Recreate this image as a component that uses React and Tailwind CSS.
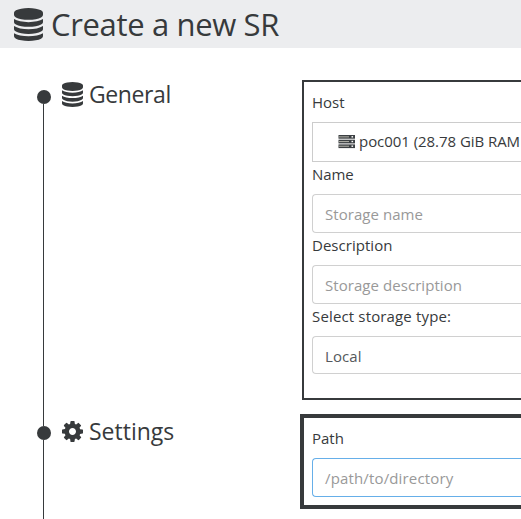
function DatabaseIcon({ className }) {
  return (
    <svg viewBox="0 0 1536 1792" preserveAspectRatio="none" fill="currentColor" className={className}>
      <path d="M768 768q237 0 443-43t325-127v170q0 69-103 128t-280 93.500-385 34.500-385-34.500-280-93.500-103-128v-170q119 84 325 127t443 43zm0 768q237 0 443-43t325-127v170q0 69-103 128t-280 93.500-385 34.500-385-34.500-280-93.500-103-128v-170q119 84 325 127t443 43zm0-384q237 0 443-43t325-127v170q0 69-103 128t-280 93.500-385 34.500-385-34.500-280-93.500-103-128v-170q119 84 325 127t443 43zm0-1152q208 0 385 34.500t280 93.500 103 128v128q0 69-103 128t-280 93.500-385 34.500-385-34.500-280-93.500-103-128v-128q0-69 103-128t280-93.500 385-34.500z" />
    </svg>
  )
}

function CogIcon({ className }) {
  return (
    <svg viewBox="128 128 1536 1536" fill="currentColor" className={className}>
      <path d="M1152 896q0-106-75-181t-181-75-181 75-75 181 75 181 181 75 181-75 75-181zm512-109v222q0 12-8 23t-20 13l-185 28q-19 54-39 91 35 50 107 138 10 12 10 25t-9 23q-27 37-99 108t-94 71q-12 0-26-9l-138-108q-44 23-91 38-16 136-29 186-7 28-36 28h-222q-14 0-24.500-8.500t-11.500-21.500l-28-184q-49-16-90-37l-141 107q-10 9-25 9-14 0-25-11-126-114-165-168-7-10-7-23 0-12 8-23 15-21 51-66.500t54-70.500q-27-50-41-99l-183-27q-13-2-21-12.500t-8-23.500v-222q0-12 8-23t19-13l186-28q14-46 39-92-40-57-107-138-10-12-10-24 0-10 9-23 26-36 98.500-107.500t94.500-71.500q13 0 26 10l138 107q44-23 91-38 16-136 29-186 7-28 36-28h222q14 0 24.500 8.500t11.500 21.500l28 184q49 16 90 37l142-107q9-9 24-9 13 0 25 10 129 119 165 170 7 8 7 22 0 12-8 23-15 21-51 66.500t-54 70.500q26 50 41 98l183 28q13 2 21 12.500t8 23.500z" />
    </svg>
  )
}

function ServerIcon({ className }) {
  return (
    <svg viewBox="0 0 16 14" className={className}>
      {[0, 4.700, 9.400].map(y => (
        <g key={y}>
          <rect x="0" y={y} width="16.500" height="3.700" fill="#3c4043" />
          <rect x="0.500" y={y + 1.300} width="10" height="1.100" fill="#a9a9a0" />
          <rect x="13" y={y + 1.100} width="1.600" height="1.400" fill="#fff" />
        </g>
      ))}
    </svg>
  )
}

function Section({ icon, title, lead, children, headingClass }) {
  return (
    <section className="flex">
      <div className="flex w-[14px] shrink-0 flex-col items-center">
        {lead}
        <div className="size-[14px] shrink-0 rounded-full bg-[#373a3c]" />
        <div className="mr-px w-px flex-1 bg-[#373a3c]" />
      </div>
      <h2 className={`flex w-[251px] shrink-0 items-center self-start pl-[11px] text-[23px] leading-[30px] ${headingClass}`}>
        {icon}
        {title}
      </h2>
      {children}
    </section>
  )
}

function Label({ children }) {
  return <div className="h-8 leading-6">{children}</div>
}

export default function App() {
  return (
    <div className="h-[519px] w-[521px] overflow-hidden bg-white font-['Open_Sans','Noto_Sans',sans-serif] text-[15px] text-[#373a3c]">
      <header className="flex h-12 items-center bg-[#ecedef] pl-[14px]">
        <DatabaseIcon className="h-[33px] w-[29px]" />
        <h1 className="ml-2 text-[31px] leading-[46px] tracking-[-0.35px] whitespace-nowrap">Create a new SR</h1>
      </header>
      <main className="w-[484px] pt-8 ml-[37px]">
        <Section
          headingClass="-mt-px"
          icon={<DatabaseIcon className="h-[25px] w-[21px]" />}
          title={<span className="ml-[6px] tracking-[-0.4px]">General</span>}
          lead={<div className="h-[10px] shrink-0" />}
        >
          <div className="min-w-0 flex-1 pb-[14px]">
            <div className="h-[320px] border-2 border-r-0 border-[#373a3c] pt-2 pl-2">
              <Label><span>Host</span></Label>
              <div className="flex h-10 items-center border border-r-0 border-[#ccc] pb-px pl-[25px]">
                <ServerIcon className="h-[14px] w-[17px] shrink-0" />
                <span className="ml-[4px] tracking-[-0.05px] whitespace-nowrap">poc001 (28.78 GiB RAM</span>
              </div>
              <Label><span className="tracking-[-0.05px]">Name</span></Label>
              <div className="flex h-[39px] items-center rounded-l border border-r-0 border-[#d0d0d0] pt-px pl-3 text-[#999]">
                <span className="tracking-[0.05px]">Storage name</span>
              </div>
              <Label><span className="tracking-[0.03px]">Description</span></Label>
              <div className="flex h-[39px] items-center rounded-l border border-r-0 border-[#d0d0d0] pt-px pl-3 text-[#999]">
                <span className="tracking-[0.06px]">Storage description</span>
              </div>
              <Label><span className="tracking-[0.15px]">Select storage type:</span></Label>
              <div className="flex h-[38px] items-center rounded-l border border-r-0 border-[#d0d0d0] pt-[2px] pl-3 text-[#55595c]">
                <span className="tracking-[0.1px]">Local</span>
              </div>
            </div>
          </div>
        </Section>
        <Section
          headingClass="mt-[2px]"
          icon={<CogIcon className="size-[21px]" />}
          title={<span className="ml-[6px]">Settings</span>}
          lead={<div className="mr-px h-3 w-px shrink-0 bg-[#373a3c]" />}
        >
          <div className="-ml-0.5 min-w-0 flex-1 pb-6">
            <div className="h-[95px] border-4 border-r-0 border-[#373a3c] pt-2 pl-2">
              <Label><span>Path</span></Label>
              <div className="flex h-[39px] items-center rounded-l border border-r-0 border-[#66afe9] pt-px pl-3 text-[#999]">
                <span className="tracking-[0.15px]">/path/to/directory</span>
              </div>
            </div>
          </div>
        </Section>
      </main>
    </div>
  )
}
